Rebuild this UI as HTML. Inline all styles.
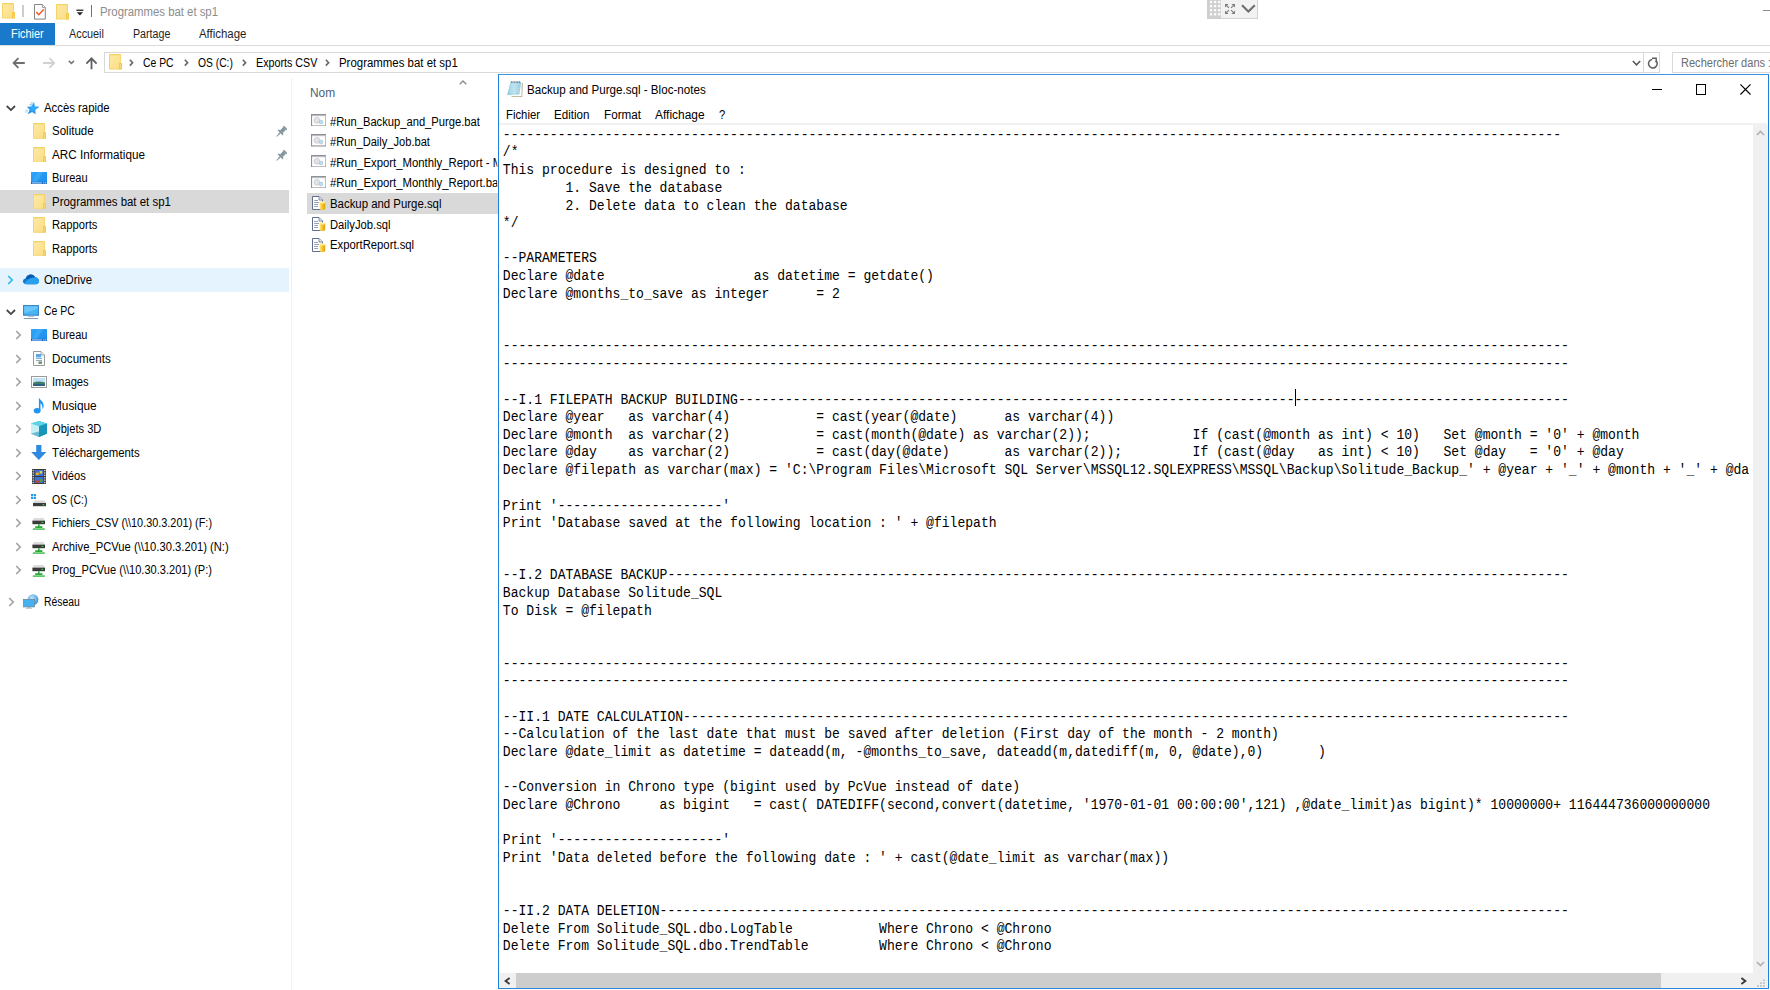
<!DOCTYPE html>
<html lang="fr"><head><meta charset="utf-8"><title>Programmes bat et sp1</title><style>
html,body{margin:0;padding:0;background:#fff;}
body{width:1770px;height:990px;position:relative;overflow:hidden;font-family:"Liberation Sans", sans-serif;font-size:12.0px;}
.r{position:absolute;display:block;}
.t{position:absolute;height:20px;line-height:20px;white-space:nowrap;transform-origin:0 50%;}
#code{position:absolute;margin:0;font-family:"Liberation Mono",monospace;font-size:13.078px;line-height:16.1743px;color:#000;white-space:pre;width:1247.6px;height:776.15px;overflow:hidden;transform:scaleY(1.09);transform-origin:0 0;}
#code .d{position:relative;top:0px;}
</style></head><body>
<svg class="r" style="left:2px;top:3.1px;" width="13" height="15.5" viewBox="0 0 13 15.5"><defs><linearGradient id="fg" x1="0" y1="0" x2="1" y2="1"><stop offset="0" stop-color="#FDEAA6"/><stop offset="1" stop-color="#FBDD84"/></linearGradient></defs><rect x="0" y="0" width="11.9" height="15.5" rx="0.7" fill="#F5D264"/><rect x="0.9" y="1.3" width="10.1" height="13.3" fill="url(#fg)"/><rect x="10" y="9.0" width="3" height="6.5" fill="#F3C94C"/><rect x="10.9" y="9.9" width="0.8" height="5" fill="#F9DD83"/></svg>
<div class="r" style="left:22.2px;top:5px;width:1.4px;height:11.7px;background:#cdcdcd;"></div>
<svg class="r" style="left:34.2px;top:4.2px;" width="11.8" height="15.6" viewBox="0 0 11.8 15.6"><path d="M0.5 0.5 H8.4 L11.3 3.4 V15.1 H0.5 Z" fill="#fbfcfd" stroke="#858585" stroke-width="1"/><path d="M8.4 0.5 V3.4 H11.3" fill="#fff" stroke="#858585" stroke-width="0.8"/><path d="M2.3 8 L4.8 10.7 L9.7 5.6" fill="none" stroke="#f05a1e" stroke-width="1.5"/></svg>
<svg class="r" style="left:55.9px;top:4.2px;" width="13" height="15.6" viewBox="0 0 13 15.6"><defs><linearGradient id="fg" x1="0" y1="0" x2="1" y2="1"><stop offset="0" stop-color="#FDEAA6"/><stop offset="1" stop-color="#FBDD84"/></linearGradient></defs><rect x="0" y="0" width="11.9" height="15.6" rx="0.7" fill="#F5D264"/><rect x="0.9" y="1.3" width="10.1" height="13.399999999999999" fill="url(#fg)"/><rect x="10" y="9.1" width="3" height="6.5" fill="#F3C94C"/><rect x="10.9" y="10.0" width="0.8" height="5" fill="#F9DD83"/></svg>
<svg class="r" style="left:76px;top:9.3px;" width="8" height="7" viewBox="0 0 8 7"><rect x="0.4" y="0.6" width="7" height="1.3" fill="#222"/><path d="M0.8 3.2 H7 L3.9 6.4 Z" fill="#222"/></svg>
<div class="r" style="left:91px;top:5px;width:1.1px;height:11.7px;background:#707070;"></div>
<div class="t" id="t0" style="left:99.6px;top:1.8000000000000007px;color:#8c8c8c;transform:scaleX(0.9460);">Programmes bat et sp1</div>
<div class="r" style="left:1207.2px;top:-1px;width:50.7px;height:19.8px;background:#f2f2f2;border:1px solid #d2d2d2;box-sizing:border-box;"></div>
<div class="r" style="left:1207.2px;top:0px;width:13.6px;height:18.8px;background:#cfcfcf;"></div>
<svg class="r" style="left:1209px;top:0px;" width="12" height="17" viewBox="0 0 12 17"><rect x="0.90" y="0.90" width="2.3" height="2.3" fill="#fcfcfc"/><rect x="0.90" y="4.97" width="2.3" height="2.3" fill="#fcfcfc"/><rect x="0.90" y="9.04" width="2.3" height="2.3" fill="#fcfcfc"/><rect x="0.90" y="13.11" width="2.3" height="2.3" fill="#fcfcfc"/><rect x="4.97" y="0.90" width="2.3" height="2.3" fill="#fcfcfc"/><rect x="4.97" y="4.97" width="2.3" height="2.3" fill="#fcfcfc"/><rect x="4.97" y="9.04" width="2.3" height="2.3" fill="#fcfcfc"/><rect x="4.97" y="13.11" width="2.3" height="2.3" fill="#fcfcfc"/><rect x="9.04" y="0.90" width="2.3" height="2.3" fill="#fcfcfc"/><rect x="9.04" y="4.97" width="2.3" height="2.3" fill="#fcfcfc"/><rect x="9.04" y="9.04" width="2.3" height="2.3" fill="#fcfcfc"/><rect x="9.04" y="13.11" width="2.3" height="2.3" fill="#fcfcfc"/></svg>
<svg class="r" style="left:1225.1px;top:4.1px;" width="10" height="10" viewBox="0 0 10 10"><path d="M0 0 H3.6 L0 3.6 Z M10 0 V3.6 L6.4 0 Z M10 10 H6.4 L10 6.4 Z M0 10 V6.4 L3.6 10 Z" fill="#7d7d7d"/><path d="M1.2 1.2 L3.9 3.9 M8.8 1.2 L6.1 3.9 M8.8 8.8 L6.1 6.1 M1.2 8.8 L3.9 6.1" stroke="#7d7d7d" stroke-width="1.1" fill="none"/></svg>
<svg class="r" style="left:1240.6px;top:4.4px;" width="15" height="10" viewBox="0 0 15 10"><path d="M1 1.2 L7.4 7.6 L13.8 1.2" fill="none" stroke="#6e6e6e" stroke-width="2.1"/></svg>
<div class="r" style="left:1763px;top:10px;width:8px;height:1px;background:#8a8a8a;"></div>
<div class="r" style="left:0px;top:22.6px;width:54.8px;height:22.2px;background:#1979ca;"></div>
<div class="t" id="t1" style="left:11.3px;top:23.799999999999997px;color:#fff;transform:scaleX(0.9079);">Fichier</div>
<div class="t" id="t2" style="left:68.9px;top:23.799999999999997px;color:#1f1f1f;transform:scaleX(0.9021);">Accueil</div>
<div class="t" id="t3" style="left:132.8px;top:23.799999999999997px;color:#1f1f1f;transform:scaleX(0.8898);">Partage</div>
<div class="t" id="t4" style="left:199.2px;top:23.799999999999997px;color:#1f1f1f;transform:scaleX(0.9513);">Affichage</div>
<div class="r" style="left:0px;top:44.8px;width:1770px;height:1px;background:#dadbdc;"></div>
<svg class="r" style="left:12px;top:56.7px;" width="14" height="12" viewBox="0 0 14 12"><path d="M12.8 6 H1.8 M6.4 1.2 L1.6 6 L6.4 10.8" fill="none" stroke="#6e6e6e" stroke-width="1.8"/></svg>
<svg class="r" style="left:41.5px;top:56.7px;" width="14" height="12" viewBox="0 0 14 12"><path d="M1 6 H12 M7.4 1.2 L12.2 6 L7.4 10.8" fill="none" stroke="#d2d2d2" stroke-width="1.8"/></svg>
<svg class="r" style="left:68px;top:60.2px;" width="7" height="5" viewBox="0 0 7 5"><path d="M0.8 0.8 L3.4 3.3 L6 0.8" fill="none" stroke="#7a7a7a" stroke-width="1.6"/></svg>
<svg class="r" style="left:85px;top:56.6px;" width="13" height="13" viewBox="0 0 13 13"><path d="M6.5 12.2 V1.6 M1.4 6.6 L6.5 1.4 L11.6 6.6" fill="none" stroke="#606060" stroke-width="1.8"/></svg>
<div class="r" style="left:104px;top:52px;width:1556px;height:21px;background:#fff;border:1px solid #d9d9d9;box-sizing:border-box;"></div>
<svg class="r" style="left:109px;top:54px;" width="13" height="15.5" viewBox="0 0 13 15.5"><defs><linearGradient id="fg" x1="0" y1="0" x2="1" y2="1"><stop offset="0" stop-color="#FDEAA6"/><stop offset="1" stop-color="#FBDD84"/></linearGradient></defs><rect x="0" y="0" width="11.9" height="15.5" rx="0.7" fill="#F5D264"/><rect x="0.9" y="1.3" width="10.1" height="13.3" fill="url(#fg)"/><rect x="10" y="9.0" width="3" height="6.5" fill="#F3C94C"/><rect x="10.9" y="9.9" width="0.8" height="5" fill="#F9DD83"/></svg>
<svg class="r" style="left:129.1px;top:59.4px;" width="6" height="8" viewBox="0 0 6 8"><path d="M0.8 0.8 L3.6 3.7 L0.8 6.6" fill="none" stroke="#666" stroke-width="1.6"/></svg>
<div class="t" id="t5" style="left:143.4px;top:52.6px;color:#000;transform:scaleX(0.8658);">Ce PC</div>
<svg class="r" style="left:183.6px;top:59.4px;" width="6" height="8" viewBox="0 0 6 8"><path d="M0.8 0.8 L3.6 3.7 L0.8 6.6" fill="none" stroke="#666" stroke-width="1.6"/></svg>
<div class="t" id="t6" style="left:197.5px;top:52.6px;color:#000;transform:scaleX(0.8581);">OS (C:)</div>
<svg class="r" style="left:242.2px;top:59.4px;" width="6" height="8" viewBox="0 0 6 8"><path d="M0.8 0.8 L3.6 3.7 L0.8 6.6" fill="none" stroke="#666" stroke-width="1.6"/></svg>
<div class="t" id="t7" style="left:255.6px;top:52.6px;color:#000;transform:scaleX(0.8937);">Exports CSV</div>
<svg class="r" style="left:324.6px;top:59.4px;" width="6" height="8" viewBox="0 0 6 8"><path d="M0.8 0.8 L3.6 3.7 L0.8 6.6" fill="none" stroke="#666" stroke-width="1.6"/></svg>
<div class="t" id="t8" style="left:339.2px;top:52.6px;color:#000;transform:scaleX(0.9524);">Programmes bat et sp1</div>
<svg class="r" style="left:1631.5px;top:59.5px;" width="9" height="7" viewBox="0 0 9 7"><path d="M0.8 1 L4.5 4.8 L8.2 1" fill="none" stroke="#555" stroke-width="1.5"/></svg>
<div class="r" style="left:1643px;top:53px;width:1px;height:19px;background:#d9d9d9;"></div>
<svg class="r" style="left:1646.6px;top:57px;" width="12" height="12" viewBox="0 0 12 12"><path d="M8.9 3.6 A4.3 4.3 0 1 1 5.2 2.4" fill="none" stroke="#5e5e5e" stroke-width="1.5"/><path d="M5 1.3 H9.2 V5.4" fill="none" stroke="#5e5e5e" stroke-width="1.4"/></svg>
<div class="r" style="left:1672px;top:52px;width:110px;height:21px;background:#fff;border:1px solid #d9d9d9;box-sizing:border-box;"></div>
<div class="t" id="t9" style="left:1681.3px;top:52.6px;color:#6d6d6d;transform:scaleX(0.9198);">Rechercher dans :</div>
<div class="r" style="left:0px;top:190.2px;width:289.4px;height:23px;background:#d9d9d9;"></div>
<div class="r" style="left:0px;top:268.4px;width:289.4px;height:23.2px;background:#e5f3ff;"></div>
<div class="r" style="left:290.8px;top:78px;width:1px;height:912px;background:#f2f2f2;"></div>
<svg class="r" style="left:5.9px;top:105px;" width="10" height="7" viewBox="0 0 10 7"><path d="M0.8 1 L4.9 5.1 L9 1" fill="none" stroke="#454545" stroke-width="1.8"/></svg>
<svg class="r" style="left:25.2px;top:101.5px;" width="15" height="14" viewBox="0 0 15 14"><defs><radialGradient id="qg" cx="0.5" cy="0.5" r="0.6"><stop offset="0" stop-color="#35b2ff"/><stop offset="1" stop-color="#1a86e0"/></radialGradient></defs><path d="M9.02 0.30 L9.99 4.43 L14.38 4.86 L10.41 7.84 L10.51 12.24 L7.09 9.95 L2.75 12.24 L4.61 7.84 L1.83 4.86 L6.40 4.43 Z" fill="url(#qg)"/><path d="M5.6 0.9 H8.2 M4.4 2.7 H7.4 M5.6 4.4 H7" stroke="#4bb0f4" stroke-width="0.9" fill="none" opacity="0.8"/><path d="M0.6 8.2 H3 M0 9.9 H2.6" stroke="#6fc0f6" stroke-width="0.9" fill="none" opacity="0.8"/></svg>
<div class="t" id="t10" style="left:44.2px;top:98px;color:#000;transform:scaleX(0.9456);">Accès rapide</div>
<svg class="r" style="left:33.1px;top:123.1px;" width="13" height="15.7" viewBox="0 0 13 15.7"><defs><linearGradient id="fg" x1="0" y1="0" x2="1" y2="1"><stop offset="0" stop-color="#FDEAA6"/><stop offset="1" stop-color="#FBDD84"/></linearGradient></defs><rect x="0" y="0" width="11.9" height="15.7" rx="0.7" fill="#F5D264"/><rect x="0.9" y="1.3" width="10.1" height="13.5" fill="url(#fg)"/><rect x="10" y="9.2" width="3" height="6.5" fill="#F3C94C"/><rect x="10.9" y="10.1" width="0.8" height="5" fill="#F9DD83"/></svg>
<div class="t" id="t11" style="left:52.3px;top:121.30000000000001px;color:#000;transform:scaleX(0.9614);">Solitude</div>
<svg class="r" style="left:274.9px;top:126.2px;" width="12" height="12" viewBox="0 0 12 12"><g transform="rotate(45 6 6)" fill="#8496a0"><rect x="3.5" y="-0.6" width="5" height="1.5"/><rect x="4.1" y="0.8" width="3.8" height="4.6"/><path d="M2.2 7.2 C2.2 6 3.4 5.2 4.4 5.2 H7.6 C8.6 5.2 9.8 6 9.8 7.2 Z"/><path d="M5.2 7.2 H6.8 L6.3 12.4 H5.7 Z"/></g></svg>
<svg class="r" style="left:33.1px;top:146.5px;" width="13" height="15.7" viewBox="0 0 13 15.7"><defs><linearGradient id="fg" x1="0" y1="0" x2="1" y2="1"><stop offset="0" stop-color="#FDEAA6"/><stop offset="1" stop-color="#FBDD84"/></linearGradient></defs><rect x="0" y="0" width="11.9" height="15.7" rx="0.7" fill="#F5D264"/><rect x="0.9" y="1.3" width="10.1" height="13.5" fill="url(#fg)"/><rect x="10" y="9.2" width="3" height="6.5" fill="#F3C94C"/><rect x="10.9" y="10.1" width="0.8" height="5" fill="#F9DD83"/></svg>
<div class="t" id="t12" style="left:52.3px;top:144.70000000000002px;color:#000;transform:scaleX(0.9740);">ARC Informatique</div>
<svg class="r" style="left:274.9px;top:149.6px;" width="12" height="12" viewBox="0 0 12 12"><g transform="rotate(45 6 6)" fill="#8496a0"><rect x="3.5" y="-0.6" width="5" height="1.5"/><rect x="4.1" y="0.8" width="3.8" height="4.6"/><path d="M2.2 7.2 C2.2 6 3.4 5.2 4.4 5.2 H7.6 C8.6 5.2 9.8 6 9.8 7.2 Z"/><path d="M5.2 7.2 H6.8 L6.3 12.4 H5.7 Z"/></g></svg>
<svg class="r" style="left:31.2px;top:172.4px;" width="16" height="12" viewBox="0 0 16 12"><defs><linearGradient id="dg" x1="0" y1="0" x2="1" y2="1"><stop offset="0" stop-color="#2fa6f8"/><stop offset="1" stop-color="#1a8ceb"/></linearGradient></defs><rect x="0" y="0" width="16" height="12" fill="url(#dg)"/><path d="M7 0 H12 L6 10 H1 Z" fill="#5bbcfb" opacity="0.35"/><rect x="0" y="9.8" width="16" height="2.2" fill="#1468c4"/><rect x="1" y="10.5" width="10" height="0.9" fill="#d8ecfc"/><rect x="12.3" y="10.4" width="1.1" height="1" fill="#fff"/><rect x="14.2" y="10.4" width="1.1" height="1" fill="#fff"/></svg>
<div class="t" id="t13" style="left:52.3px;top:168.3px;color:#000;transform:scaleX(0.9198);">Bureau</div>
<svg class="r" style="left:33.1px;top:193.6px;" width="13" height="15.7" viewBox="0 0 13 15.7"><defs><linearGradient id="fg" x1="0" y1="0" x2="1" y2="1"><stop offset="0" stop-color="#FDEAA6"/><stop offset="1" stop-color="#FBDD84"/></linearGradient></defs><rect x="0" y="0" width="11.9" height="15.7" rx="0.7" fill="#F5D264"/><rect x="0.9" y="1.3" width="10.1" height="13.5" fill="url(#fg)"/><rect x="10" y="9.2" width="3" height="6.5" fill="#F3C94C"/><rect x="10.9" y="10.1" width="0.8" height="5" fill="#F9DD83"/></svg>
<div class="t" id="t14" style="left:52.3px;top:191.8px;color:#000;transform:scaleX(0.9532);">Programmes bat et sp1</div>
<svg class="r" style="left:33.1px;top:217.1px;" width="13" height="15.7" viewBox="0 0 13 15.7"><defs><linearGradient id="fg" x1="0" y1="0" x2="1" y2="1"><stop offset="0" stop-color="#FDEAA6"/><stop offset="1" stop-color="#FBDD84"/></linearGradient></defs><rect x="0" y="0" width="11.9" height="15.7" rx="0.7" fill="#F5D264"/><rect x="0.9" y="1.3" width="10.1" height="13.5" fill="url(#fg)"/><rect x="10" y="9.2" width="3" height="6.5" fill="#F3C94C"/><rect x="10.9" y="10.1" width="0.8" height="5" fill="#F9DD83"/></svg>
<div class="t" id="t15" style="left:52.3px;top:215.3px;color:#000;transform:scaleX(0.9322);">Rapports</div>
<svg class="r" style="left:33.1px;top:240.5px;" width="13" height="15.7" viewBox="0 0 13 15.7"><defs><linearGradient id="fg" x1="0" y1="0" x2="1" y2="1"><stop offset="0" stop-color="#FDEAA6"/><stop offset="1" stop-color="#FBDD84"/></linearGradient></defs><rect x="0" y="0" width="11.9" height="15.7" rx="0.7" fill="#F5D264"/><rect x="0.9" y="1.3" width="10.1" height="13.5" fill="url(#fg)"/><rect x="10" y="9.2" width="3" height="6.5" fill="#F3C94C"/><rect x="10.9" y="10.1" width="0.8" height="5" fill="#F9DD83"/></svg>
<div class="t" id="t16" style="left:52.3px;top:238.70000000000002px;color:#000;transform:scaleX(0.9322);">Rapports</div>
<svg class="r" style="left:7.2px;top:275.2px;" width="7" height="10" viewBox="0 0 7 10"><path d="M1.2 1 L5.2 5 L1.2 9" fill="none" stroke="#2cb4f2" stroke-width="1.6"/></svg>
<svg class="r" style="left:23.4px;top:274.2px;" width="16" height="11" viewBox="0 0 16 11"><path d="M3.4 10.2 C1.2 10.2 0 8.8 0 7.2 C0 5.6 1.3 4.5 2.7 4.5 C3.4 2.2 5.6 0.6 8 0.6 C9.8 0.6 11.2 1.6 12 3.2 C14 3.2 16 4.7 16 7 C16 8.9 14.6 10.2 12.8 10.2 Z" fill="#1177d0"/><path d="M5.2 5.2 C6.6 4 8.8 3.4 12 3.2 C14 3.2 16 4.7 16 7 C16 8.9 14.6 10.2 12.8 10.2 H3.4 C2.6 10.2 1.8 10 1.2 9.5 Z" fill="#28a0ec"/><path d="M2.7 4.5 C3.4 2.2 5.6 0.6 8 0.6 C9.8 0.6 11.2 1.6 12 3.2 C9 3.3 6.6 4.2 5.2 5.2 C4.4 4.7 3.5 4.5 2.7 4.5 Z" fill="#0c5cad"/></svg>
<div class="t" id="t17" style="left:44.2px;top:270.2px;color:#000;transform:scaleX(0.9470);">OneDrive</div>
<svg class="r" style="left:5.9px;top:308.8px;" width="10" height="7" viewBox="0 0 10 7"><path d="M0.8 1 L4.9 5.1 L9 1" fill="none" stroke="#454545" stroke-width="1.8"/></svg>
<svg class="r" style="left:23.4px;top:304.6px;" width="16" height="14" viewBox="0 0 16 14"><rect x="0.6" y="0.6" width="14.8" height="9.6" fill="#46b6f6" stroke="#3383c4" stroke-width="1.1"/><path d="M1.2 1.2 H14.8 V3.6 L1.2 8.6 Z" fill="#7fd0fb" opacity="0.6"/><rect x="5" y="10.8" width="6" height="1.3" fill="#b4c4d2"/><rect x="0.8" y="13" width="14.4" height="1" fill="#7f9db8"/></svg>
<div class="t" id="t18" style="left:44.2px;top:301.4px;color:#000;transform:scaleX(0.8714);">Ce PC</div>
<svg class="r" style="left:15.2px;top:330.0px;" width="7" height="10" viewBox="0 0 7 10"><path d="M1.2 1 L5.2 5 L1.2 9" fill="none" stroke="#a3a3a3" stroke-width="1.7"/></svg>
<svg class="r" style="left:31.2px;top:329.0px;" width="16" height="12" viewBox="0 0 16 12"><defs><linearGradient id="dg" x1="0" y1="0" x2="1" y2="1"><stop offset="0" stop-color="#2fa6f8"/><stop offset="1" stop-color="#1a8ceb"/></linearGradient></defs><rect x="0" y="0" width="16" height="12" fill="url(#dg)"/><path d="M7 0 H12 L6 10 H1 Z" fill="#5bbcfb" opacity="0.35"/><rect x="0" y="9.8" width="16" height="2.2" fill="#1468c4"/><rect x="1" y="10.5" width="10" height="0.9" fill="#d8ecfc"/><rect x="12.3" y="10.4" width="1.1" height="1" fill="#fff"/><rect x="14.2" y="10.4" width="1.1" height="1" fill="#fff"/></svg>
<div class="t" id="t19" style="left:52.3px;top:324.90000000000003px;color:#000;transform:scaleX(0.9147);">Bureau</div>
<svg class="r" style="left:15.2px;top:353.59999999999997px;" width="7" height="10" viewBox="0 0 7 10"><path d="M1.2 1 L5.2 5 L1.2 9" fill="none" stroke="#a3a3a3" stroke-width="1.7"/></svg>
<svg class="r" style="left:32.8px;top:350.8px;" width="12" height="15" viewBox="0 0 12 15"><path d="M0.5 0.5 H8 L11.5 4 V14.5 H0.5 Z" fill="#fbfbfb" stroke="#9a9a9a" stroke-width="1"/><path d="M8 0.5 V4 H11.5" fill="#e8e8e8" stroke="#9a9a9a" stroke-width="0.8"/><rect x="3" y="3" width="5" height="3.4" fill="#5aa7e6"/><rect x="3" y="7" width="6" height="1" fill="#7db7ea"/><rect x="3" y="9" width="6" height="1" fill="#9ab"/><rect x="5.5" y="10.5" width="3.5" height="2.3" fill="#5f8f6a"/></svg>
<div class="t" id="t20" style="left:52.3px;top:348.5px;color:#000;transform:scaleX(0.9670);">Documents</div>
<svg class="r" style="left:15.2px;top:377.2px;" width="7" height="10" viewBox="0 0 7 10"><path d="M1.2 1 L5.2 5 L1.2 9" fill="none" stroke="#a3a3a3" stroke-width="1.7"/></svg>
<svg class="r" style="left:31.2px;top:376.0px;" width="16" height="12" viewBox="0 0 16 12"><rect x="0.5" y="0.5" width="15" height="11" fill="#fff" stroke="#9a9a9a" stroke-width="1"/><rect x="2" y="2" width="12" height="8" fill="#bfe2f7"/><path d="M2 7 Q6 4.5 14 6.5 V10 H2 Z" fill="#3f7f67"/><path d="M2 8.6 Q8 7 14 8.4 V10 H2 Z" fill="#2f5f7f"/></svg>
<div class="t" id="t21" style="left:52.3px;top:372.1px;color:#000;transform:scaleX(0.9324);">Images</div>
<svg class="r" style="left:15.2px;top:400.7px;" width="7" height="10" viewBox="0 0 7 10"><path d="M1.2 1 L5.2 5 L1.2 9" fill="none" stroke="#a3a3a3" stroke-width="1.7"/></svg>
<svg class="r" style="left:32.4px;top:396.90000000000003px;" width="13.4" height="17.6" viewBox="0 0 12 16"><path d="M6.2 0.5 C7 3 10.8 4 10.5 8.3 C10.4 9.6 9.9 10.4 9.4 11 C9.8 8 8.6 6.2 7.6 5.6 V12.2 H6.2 Z" fill="#1e96f0"/><ellipse cx="4.6" cy="12.5" rx="3.1" ry="2.4" fill="#1e96f0"/></svg>
<div class="t" id="t22" style="left:52.3px;top:395.6px;color:#000;transform:scaleX(0.9855);">Musique</div>
<svg class="r" style="left:15.2px;top:424.2px;" width="7" height="10" viewBox="0 0 7 10"><path d="M1.2 1 L5.2 5 L1.2 9" fill="none" stroke="#a3a3a3" stroke-width="1.7"/></svg>
<svg class="r" style="left:31px;top:420.8px;" width="16" height="16" viewBox="0 0 16 16"><path d="M8 0 L16 2.6 V12.6 L8 16 L0 12.6 V2.6 Z" fill="#35b9d6"/><path d="M8 0 L16 2.6 L8 5.2 L0 2.6 Z" fill="#5fd3e6"/><path d="M0 2.6 L8 5.2 V16 L0 12.6 Z" fill="#c9eff6"/><path d="M8 5.2 L16 2.6 V12.6 L8 16 Z" fill="#1797bd"/><path d="M0 12.6 L8 10.5 L16 12.6 L8 16 Z" fill="#178fb0" opacity="0.55"/></svg>
<div class="t" id="t23" style="left:52.3px;top:419.1px;color:#000;transform:scaleX(0.9258);">Objets 3D</div>
<svg class="r" style="left:15.2px;top:447.7px;" width="7" height="10" viewBox="0 0 7 10"><path d="M1.2 1 L5.2 5 L1.2 9" fill="none" stroke="#a3a3a3" stroke-width="1.7"/></svg>
<svg class="r" style="left:31.4px;top:444.7px;" width="16" height="15" viewBox="0 0 16 15"><path d="M5.2 0 H10.4 V7 H15.4 L7.8 15 L0.2 7 H5.2 Z" fill="#2e8ae0"/></svg>
<div class="t" id="t24" style="left:52.3px;top:442.6px;color:#000;transform:scaleX(0.9459);">Téléchargements</div>
<svg class="r" style="left:15.2px;top:471.2px;" width="7" height="10" viewBox="0 0 7 10"><path d="M1.2 1 L5.2 5 L1.2 9" fill="none" stroke="#a3a3a3" stroke-width="1.7"/></svg>
<svg class="r" style="left:32.2px;top:469.2px;" width="14" height="15" viewBox="0 0 14 15"><rect x="0" y="0" width="14" height="15" fill="#3a3a3a"/><rect x="2.6" y="1" width="8.8" height="6" fill="#3c6fd0"/><rect x="2.6" y="8" width="8.8" height="6" fill="#3c6fd0"/><rect x="4" y="3.6" width="3" height="2.4" fill="#e0b030"/><rect x="7.6" y="2" width="2.6" height="2.6" fill="#e8d040"/><rect x="3.4" y="11.6" width="4" height="2" fill="#d04030"/><rect x="8" y="10" width="2.4" height="3" fill="#50a040"/><rect x="0.6" y="0.9" width="1.2" height="1.3" fill="#eee"/><rect x="12.2" y="0.9" width="1.2" height="1.3" fill="#eee"/><rect x="0.6" y="3.3" width="1.2" height="1.3" fill="#eee"/><rect x="12.2" y="3.3" width="1.2" height="1.3" fill="#eee"/><rect x="0.6" y="5.7" width="1.2" height="1.3" fill="#eee"/><rect x="12.2" y="5.7" width="1.2" height="1.3" fill="#eee"/><rect x="0.6" y="8.1" width="1.2" height="1.3" fill="#eee"/><rect x="12.2" y="8.1" width="1.2" height="1.3" fill="#eee"/><rect x="0.6" y="10.5" width="1.2" height="1.3" fill="#eee"/><rect x="12.2" y="10.5" width="1.2" height="1.3" fill="#eee"/><rect x="0.6" y="12.9" width="1.2" height="1.3" fill="#eee"/><rect x="12.2" y="12.9" width="1.2" height="1.3" fill="#eee"/></svg>
<div class="t" id="t25" style="left:52.3px;top:466.1px;color:#000;transform:scaleX(0.9237);">Vidéos</div>
<svg class="r" style="left:15.2px;top:494.7px;" width="7" height="10" viewBox="0 0 7 10"><path d="M1.2 1 L5.2 5 L1.2 9" fill="none" stroke="#a3a3a3" stroke-width="1.7"/></svg>
<svg class="r" style="left:31px;top:494.1px;" width="16" height="13" viewBox="0 0 16 13"><rect x="0" y="0" width="2.2" height="2.2" fill="#1e9af0"/><rect x="2.8" y="0" width="2.2" height="2.2" fill="#1e9af0"/><rect x="0" y="2.8" width="2.2" height="2.2" fill="#1e9af0"/><rect x="2.8" y="2.8" width="2.2" height="2.2" fill="#1e9af0"/><path d="M3.6 6.5 H13.4 L15 9 H2 Z" fill="#d8d8d8"/><rect x="2" y="9" width="13" height="3.2" fill="#3c3c3c"/><rect x="11.6" y="10" width="1.6" height="1.2" fill="#35d040"/></svg>
<div class="t" id="t26" style="left:52.3px;top:489.6px;color:#000;transform:scaleX(0.8704);">OS (C:)</div>
<svg class="r" style="left:15.2px;top:518.3px;" width="7" height="10" viewBox="0 0 7 10"><path d="M1.2 1 L5.2 5 L1.2 9" fill="none" stroke="#a3a3a3" stroke-width="1.7"/></svg>
<svg class="r" style="left:32.4px;top:518.1px;" width="14" height="12" viewBox="0 0 14 12"><path d="M2 0 H11.4 L13 2.6 H0.4 Z" fill="#dcdcdc"/><rect x="0.4" y="2.6" width="12.6" height="3.6" fill="#3a3a3a"/><rect x="9.6" y="3.8" width="1.6" height="1.2" fill="#35d040"/><rect x="6" y="6.2" width="1.6" height="3" fill="#2eaa3c"/><rect x="3.2" y="8.2" width="7.2" height="1.8" fill="#2eaa3c"/><rect x="0.8" y="10.4" width="12" height="1.4" fill="#35b844"/></svg>
<div class="t" id="t27" style="left:52.3px;top:513.1999999999999px;color:#000;transform:scaleX(0.9053);">Fichiers_CSV (\\10.30.3.201) (F:)</div>
<svg class="r" style="left:15.2px;top:541.8px;" width="7" height="10" viewBox="0 0 7 10"><path d="M1.2 1 L5.2 5 L1.2 9" fill="none" stroke="#a3a3a3" stroke-width="1.7"/></svg>
<svg class="r" style="left:32.4px;top:541.6px;" width="14" height="12" viewBox="0 0 14 12"><path d="M2 0 H11.4 L13 2.6 H0.4 Z" fill="#dcdcdc"/><rect x="0.4" y="2.6" width="12.6" height="3.6" fill="#3a3a3a"/><rect x="9.6" y="3.8" width="1.6" height="1.2" fill="#35d040"/><rect x="6" y="6.2" width="1.6" height="3" fill="#2eaa3c"/><rect x="3.2" y="8.2" width="7.2" height="1.8" fill="#2eaa3c"/><rect x="0.8" y="10.4" width="12" height="1.4" fill="#35b844"/></svg>
<div class="t" id="t28" style="left:52.3px;top:536.6999999999999px;color:#000;transform:scaleX(0.9350);">Archive_PCVue (\\10.30.3.201) (N:)</div>
<svg class="r" style="left:15.2px;top:565.3px;" width="7" height="10" viewBox="0 0 7 10"><path d="M1.2 1 L5.2 5 L1.2 9" fill="none" stroke="#a3a3a3" stroke-width="1.7"/></svg>
<svg class="r" style="left:32.4px;top:565.1px;" width="14" height="12" viewBox="0 0 14 12"><path d="M2 0 H11.4 L13 2.6 H0.4 Z" fill="#dcdcdc"/><rect x="0.4" y="2.6" width="12.6" height="3.6" fill="#3a3a3a"/><rect x="9.6" y="3.8" width="1.6" height="1.2" fill="#35d040"/><rect x="6" y="6.2" width="1.6" height="3" fill="#2eaa3c"/><rect x="3.2" y="8.2" width="7.2" height="1.8" fill="#2eaa3c"/><rect x="0.8" y="10.4" width="12" height="1.4" fill="#35b844"/></svg>
<div class="t" id="t29" style="left:52.3px;top:560.1999999999999px;color:#000;transform:scaleX(0.9214);">Prog_PCVue (\\10.30.3.201) (P:)</div>
<svg class="r" style="left:7.6px;top:596.6px;" width="7" height="10" viewBox="0 0 7 10"><path d="M1.2 1 L5.2 5 L1.2 9" fill="none" stroke="#a3a3a3" stroke-width="1.7"/></svg>
<svg class="r" style="left:23.4px;top:593.6px;" width="16" height="15" viewBox="0 0 16 15"><defs><radialGradient id="ng" cx="0.4" cy="0.35" r="0.7"><stop offset="0" stop-color="#bfe6fb"/><stop offset="1" stop-color="#2f8fd8"/></radialGradient></defs><circle cx="10" cy="5.6" r="5.4" fill="url(#ng)"/><rect x="0.5" y="5.5" width="11" height="7.4" fill="#45b0f2" stroke="#6f8aa0" stroke-width="0.8"/><rect x="4.2" y="13.2" width="3.6" height="0.9" fill="#9fb0bd"/><rect x="2.8" y="14.2" width="6.4" height="0.8" fill="#b7c3cc"/></svg>
<div class="t" id="t30" style="left:44.2px;top:591.6px;color:#000;transform:scaleX(0.8653);">Réseau</div>
<div class="t" id="t31" style="left:310.3px;top:82.6px;color:#4c607a;transform:scaleX(0.9943);">Nom</div>
<svg class="r" style="left:458.5px;top:80.4px;" width="8" height="5" viewBox="0 0 8 5"><path d="M0.7 4.3 L4 1.1 L7.3 4.3" fill="none" stroke="#8e8e8e" stroke-width="1.4"/></svg>
<div class="r" style="left:307px;top:193.2px;width:191px;height:21px;background:#d9d9d9;"></div>
<svg class="r" style="left:310.8px;top:113.89999999999999px;" width="15.5" height="12.5" viewBox="0 0 15.5 12.5"><rect x="0.55" y="0.55" width="14.4" height="11.4" fill="#fff" stroke="#8e9197" stroke-width="1.1"/><rect x="1" y="1" width="13.5" height="1.2" fill="#b9bcc2"/><circle cx="5.9" cy="6.3" r="2.9" fill="#e4e6e9" stroke="#c3c7cc" stroke-width="0.8"/><circle cx="5.9" cy="6.3" r="1.2" fill="#eceef0" stroke="#d4c9c9" stroke-width="0.4"/><circle cx="10" cy="8" r="1.9" fill="#b3e2fb" stroke="#b4c0ca" stroke-width="0.7"/></svg>
<div class="t" id="t32" style="left:330.4px;top:111.5px;color:#000;transform:scaleX(0.9316);">#Run_Backup_and_Purge.bat</div>
<svg class="r" style="left:310.8px;top:134.4px;" width="15.5" height="12.5" viewBox="0 0 15.5 12.5"><rect x="0.55" y="0.55" width="14.4" height="11.4" fill="#fff" stroke="#8e9197" stroke-width="1.1"/><rect x="1" y="1" width="13.5" height="1.2" fill="#b9bcc2"/><circle cx="5.9" cy="6.3" r="2.9" fill="#e4e6e9" stroke="#c3c7cc" stroke-width="0.8"/><circle cx="5.9" cy="6.3" r="1.2" fill="#eceef0" stroke="#d4c9c9" stroke-width="0.4"/><circle cx="10" cy="8" r="1.9" fill="#b3e2fb" stroke="#b4c0ca" stroke-width="0.7"/></svg>
<div class="t" id="t33" style="left:330.4px;top:132.0px;color:#000;transform:scaleX(0.9243);">#Run_Daily_Job.bat</div>
<svg class="r" style="left:310.8px;top:154.9px;" width="15.5" height="12.5" viewBox="0 0 15.5 12.5"><rect x="0.55" y="0.55" width="14.4" height="11.4" fill="#fff" stroke="#8e9197" stroke-width="1.1"/><rect x="1" y="1" width="13.5" height="1.2" fill="#b9bcc2"/><circle cx="5.9" cy="6.3" r="2.9" fill="#e4e6e9" stroke="#c3c7cc" stroke-width="0.8"/><circle cx="5.9" cy="6.3" r="1.2" fill="#eceef0" stroke="#d4c9c9" stroke-width="0.4"/><circle cx="10" cy="8" r="1.9" fill="#b3e2fb" stroke="#b4c0ca" stroke-width="0.7"/></svg>
<div class="t" id="t34" style="left:330.4px;top:152.5px;color:#000;transform:scaleX(0.9453);width:177.3px;overflow:hidden;">#Run_Export_Monthly_Report - Mensuel.bat</div>
<svg class="r" style="left:310.8px;top:175.5px;" width="15.5" height="12.5" viewBox="0 0 15.5 12.5"><rect x="0.55" y="0.55" width="14.4" height="11.4" fill="#fff" stroke="#8e9197" stroke-width="1.1"/><rect x="1" y="1" width="13.5" height="1.2" fill="#b9bcc2"/><circle cx="5.9" cy="6.3" r="2.9" fill="#e4e6e9" stroke="#c3c7cc" stroke-width="0.8"/><circle cx="5.9" cy="6.3" r="1.2" fill="#eceef0" stroke="#d4c9c9" stroke-width="0.4"/><circle cx="10" cy="8" r="1.9" fill="#b3e2fb" stroke="#b4c0ca" stroke-width="0.7"/></svg>
<div class="t" id="t35" style="left:330.4px;top:173.1px;color:#000;transform:scaleX(0.9453);width:177.3px;overflow:hidden;">#Run_Export_Monthly_Report.bat</div>
<svg class="r" style="left:311.6px;top:196.29999999999998px;" width="14" height="15" viewBox="0 0 14 15"><defs><linearGradient id="cg" x1="0" y1="0" x2="1" y2="0"><stop offset="0" stop-color="#ffe98a"/><stop offset="0.45" stop-color="#f8c630"/><stop offset="1" stop-color="#e0a000"/></linearGradient></defs><path d="M0.5 0.5 H7 L10.5 4 V13.5 H0.5 Z" fill="#fff" stroke="#5f6f8f" stroke-width="1"/><path d="M7 0.5 V4 H10.5" fill="#e6eaf2" stroke="#5f6f8f" stroke-width="0.8"/><path d="M2.2 4.5 H6 M2.2 6.5 H7 M2.2 8.5 H6 M2.2 10.5 H6" stroke="#8a94ad" stroke-width="0.9"/><path d="M7.6 6.4 V12.8 C7.6 14.5 13.2 14.5 13.2 12.8 V6.4 Z" fill="url(#cg)"/><ellipse cx="10.4" cy="6.4" rx="2.8" ry="1.2" fill="#ffeb94"/></svg>
<div class="t" id="t36" style="left:330.4px;top:193.89999999999998px;color:#000;transform:scaleX(0.9496);">Backup and Purge.sql</div>
<svg class="r" style="left:311.6px;top:216.9px;" width="14" height="15" viewBox="0 0 14 15"><defs><linearGradient id="cg" x1="0" y1="0" x2="1" y2="0"><stop offset="0" stop-color="#ffe98a"/><stop offset="0.45" stop-color="#f8c630"/><stop offset="1" stop-color="#e0a000"/></linearGradient></defs><path d="M0.5 0.5 H7 L10.5 4 V13.5 H0.5 Z" fill="#fff" stroke="#5f6f8f" stroke-width="1"/><path d="M7 0.5 V4 H10.5" fill="#e6eaf2" stroke="#5f6f8f" stroke-width="0.8"/><path d="M2.2 4.5 H6 M2.2 6.5 H7 M2.2 8.5 H6 M2.2 10.5 H6" stroke="#8a94ad" stroke-width="0.9"/><path d="M7.6 6.4 V12.8 C7.6 14.5 13.2 14.5 13.2 12.8 V6.4 Z" fill="url(#cg)"/><ellipse cx="10.4" cy="6.4" rx="2.8" ry="1.2" fill="#ffeb94"/></svg>
<div class="t" id="t37" style="left:330.4px;top:214.5px;color:#000;transform:scaleX(0.9350);">DailyJob.sql</div>
<svg class="r" style="left:311.6px;top:237.5px;" width="14" height="15" viewBox="0 0 14 15"><defs><linearGradient id="cg" x1="0" y1="0" x2="1" y2="0"><stop offset="0" stop-color="#ffe98a"/><stop offset="0.45" stop-color="#f8c630"/><stop offset="1" stop-color="#e0a000"/></linearGradient></defs><path d="M0.5 0.5 H7 L10.5 4 V13.5 H0.5 Z" fill="#fff" stroke="#5f6f8f" stroke-width="1"/><path d="M7 0.5 V4 H10.5" fill="#e6eaf2" stroke="#5f6f8f" stroke-width="0.8"/><path d="M2.2 4.5 H6 M2.2 6.5 H7 M2.2 8.5 H6 M2.2 10.5 H6" stroke="#8a94ad" stroke-width="0.9"/><path d="M7.6 6.4 V12.8 C7.6 14.5 13.2 14.5 13.2 12.8 V6.4 Z" fill="url(#cg)"/><ellipse cx="10.4" cy="6.4" rx="2.8" ry="1.2" fill="#ffeb94"/></svg>
<div class="t" id="t38" style="left:330.4px;top:235.1px;color:#000;transform:scaleX(0.9410);">ExportReport.sql</div>
<div class="r" style="left:497.9px;top:74.1px;width:1271.2px;height:915.4px;background:#fff;border:1.25px solid #1f7edb;border-top:1.6px solid #3d97e3;border-bottom:1.7px solid #2a85dc;box-sizing:border-box;"></div>
<svg class="r" style="left:507px;top:81px;" width="16" height="16" viewBox="0 0 16 16"><defs><linearGradient id="npg" x1="0" y1="0" x2="1" y2="0"><stop offset="0" stop-color="#86c6dd"/><stop offset="0.5" stop-color="#b4e0ee"/><stop offset="1" stop-color="#7fbfd8"/></linearGradient></defs><path d="M4.2 15.9 H15.2 L15.8 2 H14.6 Z" fill="#b5a47a"/><path d="M4 1.6 H14.8 L14.5 15.2 H3.8 Z" fill="#fdfdfd"/><path d="M3.5 1.1 H14.2 L12.3 13.6 L0.1 13.9 Z" fill="url(#npg)"/><path d="M3.3 3.2 H13.8 M2.9 5.2 H13.5 M2.5 7.2 H13.2 M2.1 9.2 H12.9 M1.7 11.2 H12.6" stroke="#d4eef7" stroke-width="0.7" opacity="0.9"/><path d="M4.6 0.2 L4.2 1.8 M6.2 0.2 L5.8 1.8 M7.8 0.2 L7.4 1.8 M9.4 0.2 L9 1.8 M11 0.2 L10.6 1.8 M12.6 0.2 L12.2 1.8" stroke="#566470" stroke-width="0.8"/></svg>
<div class="t" id="t39" style="left:526.9px;top:79.6px;color:#000;transform:scaleX(0.9671);">Backup and Purge.sql - Bloc-notes</div>
<div class="r" style="left:1651.6px;top:89px;width:10.4px;height:1px;background:#000;"></div>
<div class="r" style="left:1695.6px;top:84.2px;width:10.4px;height:10.4px;background:transparent;border:1.1px solid #000;box-sizing:border-box;"></div>
<svg class="r" style="left:1740.4px;top:83.9px;" width="11" height="11" viewBox="0 0 11 11"><path d="M0.4 0.4 L10.5 10.5 M10.5 0.4 L0.4 10.5" stroke="#000" stroke-width="1.15" fill="none"/></svg>
<div class="t" id="t40" style="left:506px;top:104.6px;color:#000;transform:scaleX(0.9440);">Fichier</div>
<div class="t" id="t41" style="left:554.3px;top:104.6px;color:#000;transform:scaleX(0.9672);">Edition</div>
<div class="t" id="t42" style="left:604px;top:104.6px;color:#000;transform:scaleX(0.9733);">Format</div>
<div class="t" id="t43" style="left:655.4px;top:104.6px;color:#000;transform:scaleX(0.9954);">Affichage</div>
<div class="t" id="t44" style="left:718.5px;top:104.6px;color:#000;transform:scaleX(0.9300);">?</div>
<div class="r" style="left:499.4px;top:123px;width:1267.4px;height:2px;background:#f1f1f1;"></div>
<pre id="code" style="left:502.8px;top:126.5px;"><span class="d">---------------------------------------------------------------------------------------------------------------------------------------</span>
/*
This procedure is designed to :
        1. Save the database
        2. Delete data to clean the database
*/

--PARAMETERS
Declare @date                   as datetime = getdate()
Declare @months_to_save as integer      = 2


<span class="d">----------------------------------------------------------------------------------------------------------------------------------------</span>
<span class="d">----------------------------------------------------------------------------------------------------------------------------------------</span>

--I.1 FILEPATH BACKUP BUILDING<span class="d">----------------------------------------------------------------------------------------------------------</span>
Declare @year   as varchar(4)           = cast(year(@date)      as varchar(4))
Declare @month  as varchar(2)           = cast(month(@date) as varchar(2));             If (cast(@month as int) &lt; 10)   Set @month = &#x27;0&#x27; + @month
Declare @day    as varchar(2)           = cast(day(@date)       as varchar(2));         If (cast(@day   as int) &lt; 10)   Set @day   = &#x27;0&#x27; + @day
Declare @filepath as varchar(max) = &#x27;C:\Program Files\Microsoft SQL Server\MSSQL12.SQLEXPRESS\MSSQL\Backup\Solitude_Backup_&#x27; + @year + &#x27;_&#x27; + @month + &#x27;_&#x27; + @da

Print &#x27;<span class="d">---------------------</span>&#x27;
Print &#x27;Database saved at the following location : &#x27; + @filepath


--I.2 DATABASE BACKUP<span class="d">-------------------------------------------------------------------------------------------------------------------</span>
Backup Database Solitude_SQL
To Disk = @filepath


<span class="d">----------------------------------------------------------------------------------------------------------------------------------------</span>
<span class="d">----------------------------------------------------------------------------------------------------------------------------------------</span>

--II.1 DATE CALCULATION<span class="d">-----------------------------------------------------------------------------------------------------------------</span>
--Calculation of the last date that must be saved after deletion (First day of the month - 2 month)
Declare @date_limit as datetime = dateadd(m, -@months_to_save, dateadd(m,datediff(m, 0, @date),0)       )

--Conversion in Chrono type (bigint used by PcVue instead of date)
Declare @Chrono     as bigint   = cast( DATEDIFF(second,convert(datetime, &#x27;1970-01-01 00:00:00&#x27;,121) ,@date_limit)as bigint)* 10000000+ 116444736000000000

Print &#x27;<span class="d">---------------------</span>&#x27;
Print &#x27;Data deleted before the following date : &#x27; + cast(@date_limit as varchar(max))


--II.2 DATA DELETION<span class="d">--------------------------------------------------------------------------------------------------------------------</span>
Delete From Solitude_SQL.dbo.LogTable           Where Chrono &lt; @Chrono
Delete From Solitude_SQL.dbo.TrendTable         Where Chrono &lt; @Chrono
</pre>
<div class="r" style="left:1295.2px;top:388.8px;width:1px;height:17.6px;background:#000;"></div>
<div class="r" style="left:1752.6px;top:125px;width:15.2px;height:847.8px;background:#f0f0f0;"></div>
<svg class="r" style="left:1755.7px;top:130.4px;" width="9" height="6" viewBox="0 0 9 6"><path d="M0.9 5 L4.5 1.4 L8.1 5" fill="none" stroke="#b2b2b2" stroke-width="1.7"/></svg>
<svg class="r" style="left:1755.7px;top:961px;" width="9" height="6" viewBox="0 0 9 6"><path d="M0.9 1 L4.5 4.6 L8.1 1" fill="none" stroke="#b2b2b2" stroke-width="1.7"/></svg>
<div class="r" style="left:499.2px;top:972.8px;width:1268.6px;height:15.3px;background:#f0f0f0;"></div>
<div class="r" style="left:516px;top:972.8px;width:1145.4px;height:15.3px;background:#cdcdcd;"></div>
<svg class="r" style="left:503.6px;top:976.6px;" width="7" height="8" viewBox="0 0 7 8"><path d="M5.6 0.9 L1.6 4 L5.6 7.1" fill="none" stroke="#3a3a3a" stroke-width="1.9"/></svg>
<svg class="r" style="left:1739.6px;top:976.6px;" width="7" height="8" viewBox="0 0 7 8"><path d="M1.4 0.9 L5.4 4 L1.4 7.1" fill="none" stroke="#3a3a3a" stroke-width="1.9"/></svg>
<svg class="r" style="left:1757.4px;top:978.6px;" width="9" height="9" viewBox="0 0 9 9"><rect x="6.2" y="0.6" width="1.4" height="1.4" fill="#a6a6a6"/><rect x="6.2" y="3.4" width="1.4" height="1.4" fill="#a6a6a6"/><rect x="3.3" y="3.4" width="1.4" height="1.4" fill="#a6a6a6"/><rect x="6.2" y="6.2" width="1.4" height="1.4" fill="#a6a6a6"/><rect x="3.3" y="6.2" width="1.4" height="1.4" fill="#a6a6a6"/><rect x="0.4" y="6.2" width="1.4" height="1.4" fill="#a6a6a6"/></svg>
</body></html>
